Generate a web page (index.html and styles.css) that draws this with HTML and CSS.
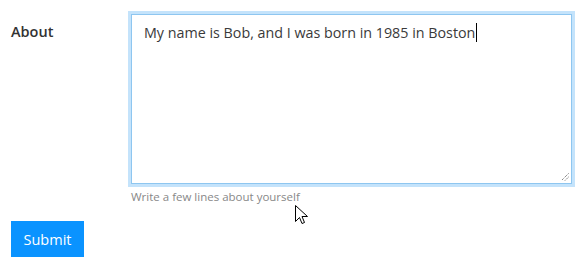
FILE: index.html
```html
<!DOCTYPE html>
<html lang="en">
<head>
<meta charset="utf-8">
<title>About</title>
<link rel="stylesheet" href="styles.css">
</head>
<body>
<form class="form">
  <div class="row">
    <label class="label">About</label>
    <div class="field">
      <div class="textbox" role="textbox">My name is Bob, and I was born in 1985 in Boston<span class="caret"></span>
        <svg class="grip" width="9" height="9" viewBox="0 0 9 9"><path d="M8.5 1.5 L1.5 8.5 M8.5 5 L5 8.5" stroke="#555" stroke-width="1" stroke-dasharray="1 1" fill="none"/></svg>
      </div>
      <div class="help">Write a few lines about yourself</div>
    </div>
  </div>
  <button type="button" class="submit">Submit</button>
</form>
<svg class="pointer" width="13" height="20" viewBox="0 0 13 20"><path d="M0.5 0.5 L0.5 16.5 L4.5 12.5 L7 18.5 L9.5 17.5 L7 11.5 L12.5 11.5 Z" fill="#fff" stroke="#000" stroke-width="1" stroke-linejoin="miter"/></svg>
</body>
</html>
```
FILE: styles.css
```css
html, body {
  margin: 0;
  padding: 0;
  background: #fff;
}
body {
  width: 585px;
  height: 272px;
  position: relative;
  overflow: hidden;
  font-family: "Open Sans", "Noto Sans", sans-serif;
}
.form {
  padding: 14px 0 0 11px;
}
.row {
  display: flex;
}
.label {
  width: 120px;
  font-size: 14.5px;
  font-weight: 600;
  color: #333;
  padding-top: 7px;
  line-height: 22px;
}
.field {
  display: flex;
  flex-direction: column;
}
.textbox {
  position: relative;
  box-sizing: border-box;
  width: 441px;
  height: 170px;
  border: 1px solid #8ec6f0;
  box-shadow: 0 0 0 3px #c4e3fb;
  padding: 7px 12px;
  font-size: 14.3px;
  line-height: 22px;
  color: #3a3a3a;
}
.caret {
  display: inline-block;
  width: 1px;
  height: 19px;
  background: #000;
  vertical-align: -4px;
  margin-left: 1px;
}
.grip {
  position: absolute;
  right: 2px;
  bottom: 2px;
}
.help {
  margin-top: 4px;
  font-size: 11.5px;
  line-height: 18px;
  color: #888;
}
.submit {
  margin-top: 15px;
  width: 73px;
  height: 36px;
  border: 0;
  background: #0a93ff;
  color: #fff;
  font-family: "Open Sans", "Noto Sans", sans-serif;
  font-size: 14.5px;
  padding: 0;
}
.pointer {
  position: absolute;
  left: 295px;
  top: 205px;
}
```
